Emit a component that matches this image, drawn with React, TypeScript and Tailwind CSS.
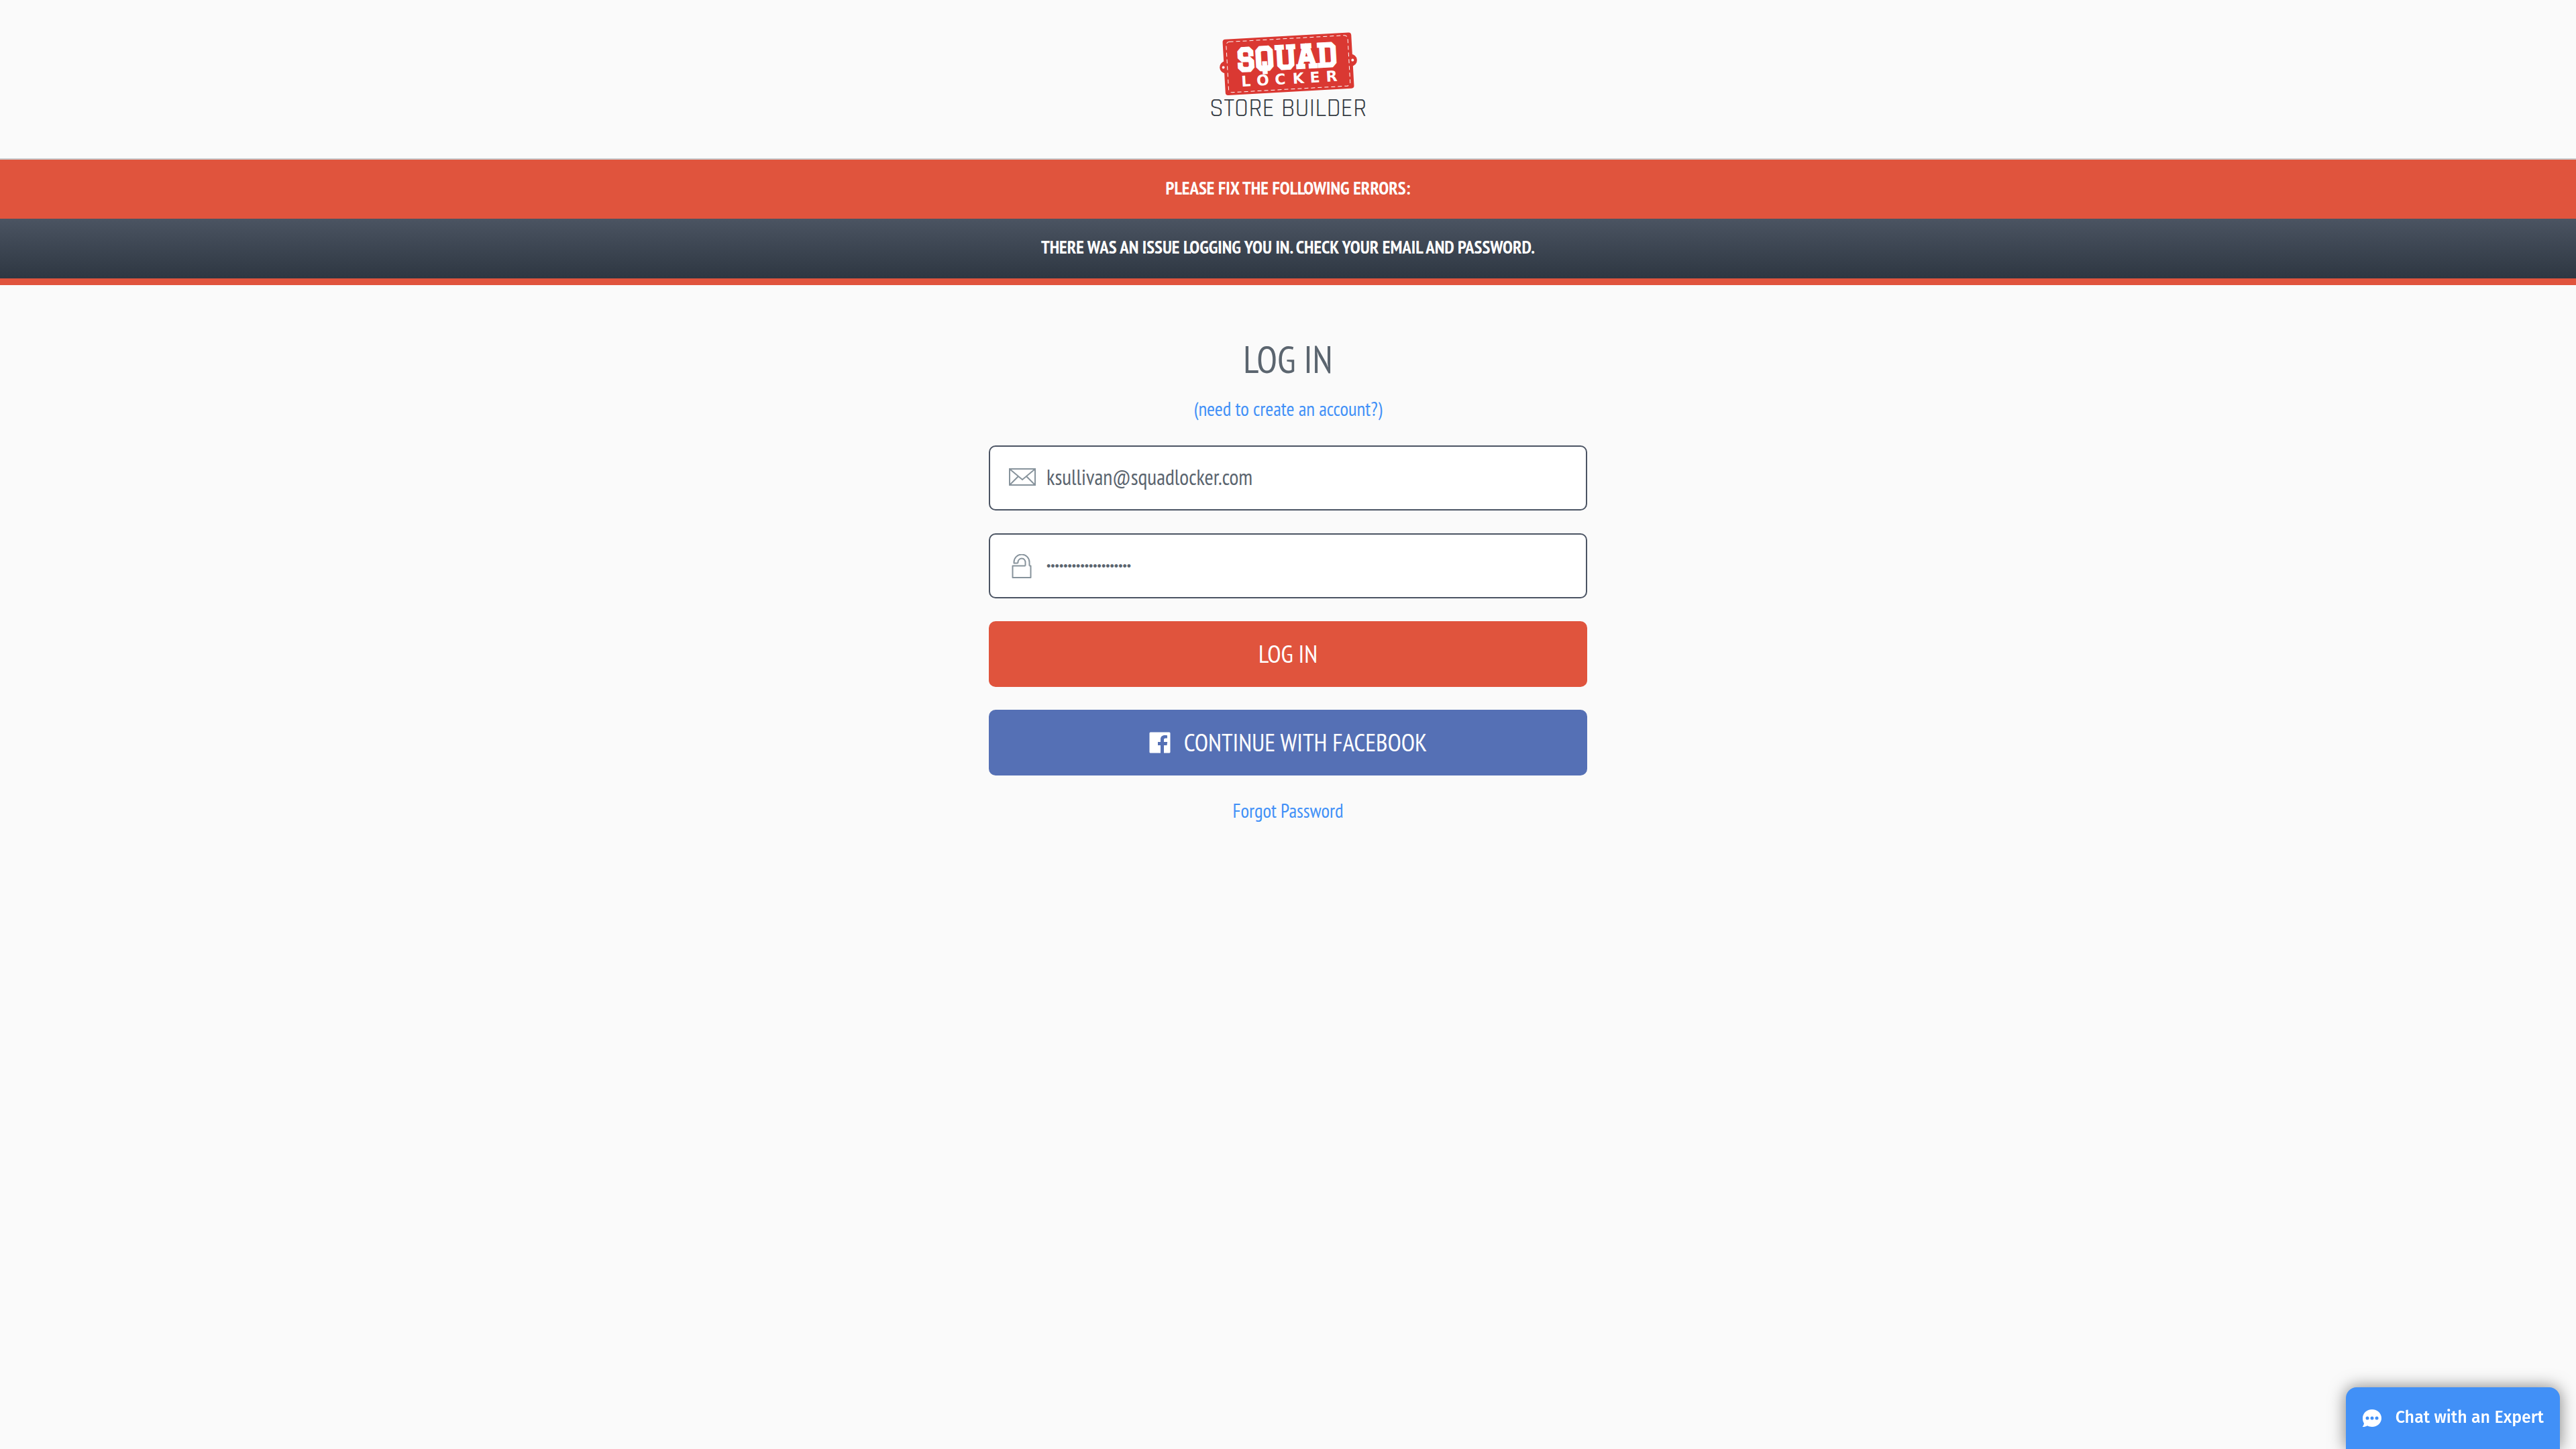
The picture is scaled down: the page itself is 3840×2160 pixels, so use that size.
function Logo() {
  return (
    <svg
      className="h-40 w-[280px]"
      viewBox="0 0 280 160"
      role="img"
      aria-label="Squad Locker Store Builder"
    >
      <g transform="rotate(-3.2 140 65)">
        <g fill="#da3832">
          <rect x="44.500" y="23.500" width="192" height="83.500" rx="4" />
          <circle cx="47" cy="65" r="9" />
          <circle cx="234" cy="65" r="9" />
        </g>
        <circle cx="43.500" cy="65" r="2" fill="#fafafa" />
        <circle cx="236.500" cy="65" r="2" fill="#fafafa" />
        <rect
          x="49.500"
          y="27.500"
          width="181.500"
          height="75.500"
          rx="5"
          fill="none"
          stroke="#fff"
          strokeWidth="1"
          strokeDasharray="6 4"
        />
        <g fill="#fff" textAnchor="middle">
          <text
            x="139"
            y="72"
            stroke="#fff"
            strokeWidth="4"
            className="font-['Graduate','Fira_Sans_Condensed',sans-serif] text-[45px]"
          >
            SQUAD
          </text>
          <text
            x="76 101 127 154 179 204"
            y="95"
            className="font-['DejaVu_Sans',sans-serif] text-[22px] font-bold"
          >
            LOCKER
          </text>
        </g>
      </g>
      <text
        x="140"
        y="143"
        textAnchor="middle"
        fill="#343a42"
        className="font-['Rajdhani','Roboto',sans-serif] text-[38px]"
      >
        STORE BUILDER
      </text>
    </svg>
  );
}

function EnvelopeIcon() {
  return (
    <svg className="h-[26px] w-10 shrink-0" viewBox="0 0 40 26" fill="none" stroke="#87939c" strokeWidth="2" aria-hidden="true">
      <rect x="1" y="1" width="38" height="24" />
      <path d="M1.500 1.500 20 17 38.500 1.500M1.500 24.500 14 12M38.500 24.500 26 12" />
    </svg>
  );
}

function LockIcon() {
  return (
    <svg className="h-9 w-10 shrink-0" viewBox="0 0 40 36" fill="none" stroke="#87939c" strokeWidth="2" strokeLinejoin="round" aria-hidden="true">
      <path d="M24.500 17.500V12a5.500 5.500 0 0 0-11 0c0 1-.5 1.500-1.500 1.500H7.500V12a11.500 11.500 0 0 1 23 0v5.500" />
      <path d="M24.500 17.500H5.500V35h27V17.500h-2" />
    </svg>
  );
}

function FacebookIcon() {
  return (
    <svg className="size-8 shrink-0" viewBox="0 0 32 32" aria-hidden="true">
      <path
        fill="#fff"
        d="M2 .5h28a1.500 1.500 0 0 1 1.500 1.500v28a1.500 1.500 0 0 1-1.500 1.500h-8V20h4.500l.7-5H22v-3.200c0-1.500.6-2.300 2.400-2.300H27V5.200c-.6-.1-2-.2-3.800-.2C19.500 5 17 7.200 17 11.200V15h-4v5h4v11.500H2A1.500 1.500 0 0 1 .5 30V2A1.500 1.500 0 0 1 2 .5Z"
      />
    </svg>
  );
}

function ChatIcon() {
  return (
    <svg className="h-7 w-[30px] shrink-0" viewBox="0 0 30 28" aria-hidden="true">
      <path
        fill="#fff"
        d="M15 1c8 0 14 5.700 14 13s-6 13-14 13c-2.600 0-5-.6-7-1.700C5.800 26.600 3.300 27.200.6 27c1.400-1.600 2.200-3.400 2.400-5.200C1.600 19.600 1 17 1 14 1 6.700 7 1 15 1Z"
      />
      <g fill="#4190f7">
        <circle cx="8" cy="14" r="2.500" />
        <circle cx="15" cy="14" r="2.500" />
        <circle cx="22" cy="14" r="2.500" />
      </g>
    </svg>
  );
}

const fieldClass =
  "flex h-[97px] items-center gap-4 rounded-[10px] border-2 border-[#4b5463] bg-white px-7";
const buttonClass =
  "flex h-[98px] items-center justify-center gap-5 rounded-[10px] text-[37px] text-white uppercase";
const linkClass = "text-[29px] leading-8 text-[#4190f7]";

export default function App() {
  return (
    <div className="min-h-screen bg-[#fafafa] font-['PT_Sans_Narrow','Open_Sans_Condensed','Roboto_Condensed',sans-serif] text-[#5b656f]">
      <header className="flex justify-center border-b-2 border-[#c8c9cb] pt-[30px] pb-[46px]">
        <Logo />
      </header>

      <div
        role="alert"
        className="border-b-10 border-[#e0543d] text-center text-[27px] font-bold text-white uppercase"
      >
        <p className="bg-[#e0543d] pb-1 leading-[84px]">Please fix the following errors:</p>
        <p className="bg-linear-to-b from-[#4b5462] to-[#2e3742] pb-1 leading-[85px]">
          There was an issue logging you in. Check your email and password.
        </p>
      </div>

      <main className="mx-auto flex w-full max-w-[892px] flex-col items-center pt-20">
        <h1 className="text-[56px] leading-[60px] uppercase">Log in</h1>
        <a href="#signup" className={`mt-7 ${linkClass}`}>
          (need to create an account?)
        </a>
        <form className="mt-[39px] flex w-full flex-col gap-[34px]">
          <label className={`${fieldClass} pb-1`}>
            <EnvelopeIcon />
            <input
              type="email"
              aria-label="Email"
              defaultValue="ksullivan@squadlocker.com"
              className="min-w-0 grow bg-transparent text-[32px] outline-none"
            />
          </label>
          <label className={fieldClass}>
            <LockIcon />
            <input
              type="password"
              aria-label="Password"
              defaultValue="squadlocker-password"
              className="min-w-0 grow bg-transparent font-['Liberation_Sans',sans-serif] text-lg outline-none"
            />
          </label>
          <button type="submit" className={`${buttonClass} bg-[#e0543d]`}>
            Log in
          </button>
          <button type="button" className={`${buttonClass} bg-[#5570b5]`}>
            <FacebookIcon />
            Continue with Facebook
          </button>
        </form>
        <a href="#forgot-password" className={`mt-9 ${linkClass}`}>
          Forgot Password
        </a>
      </main>

      <button
        type="button"
        className="fixed right-6 bottom-0 flex h-[92px] items-center gap-5 rounded-t-2xl bg-[#4190f7] px-6 font-['Fira_Sans','Open_Sans',sans-serif] text-[25px] font-medium text-white shadow-[0_0_24px_rgba(0,0,0,0.5)]"
      >
        <ChatIcon />
        Chat with an Expert
      </button>
    </div>
  );
}
